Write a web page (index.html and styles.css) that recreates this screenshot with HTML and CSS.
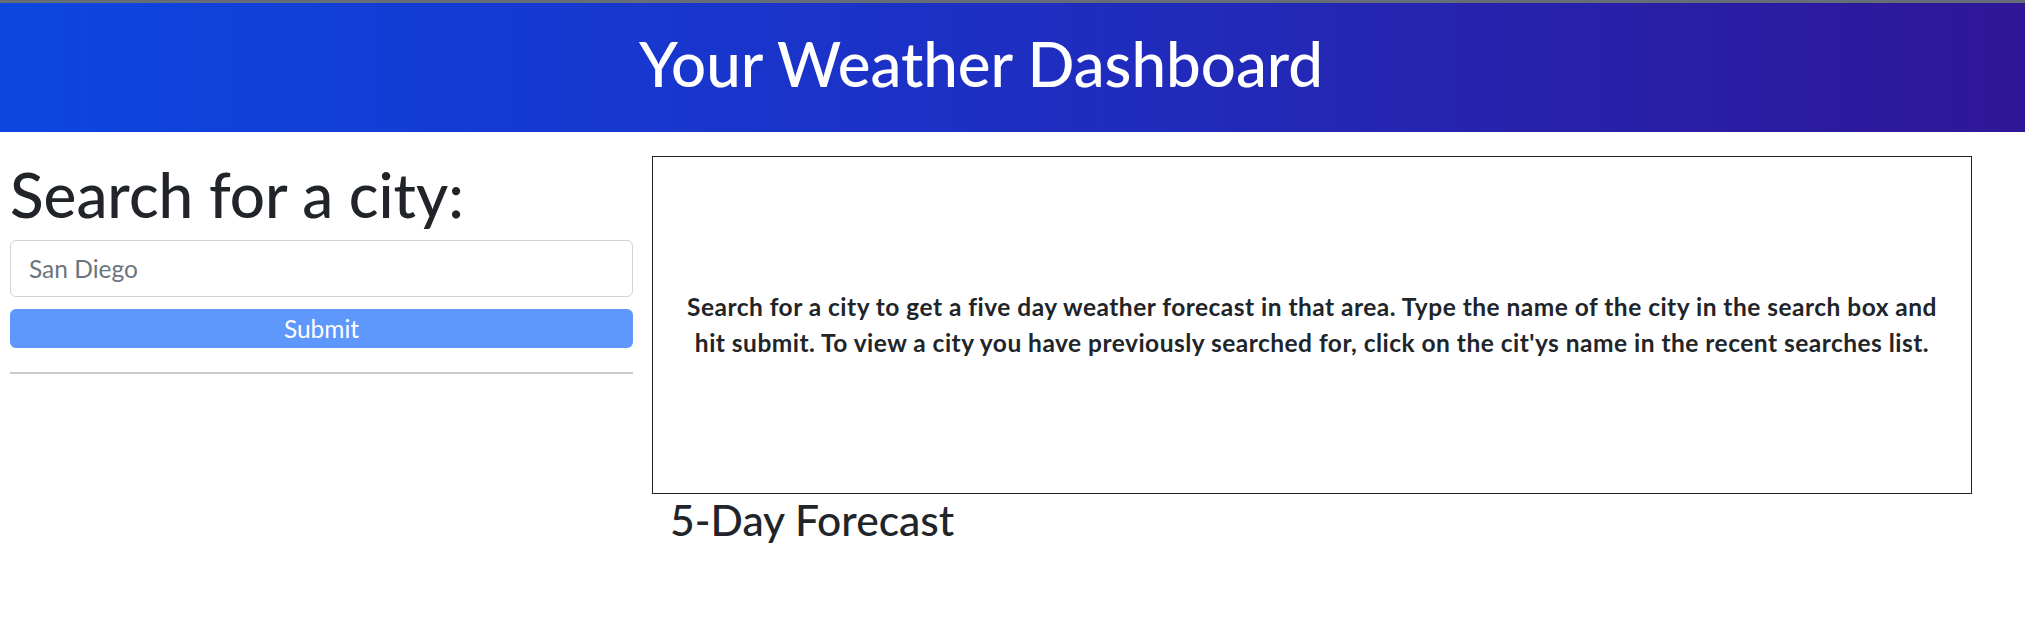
FILE: index.html
```html
<!DOCTYPE html>
<html lang="en">
<head>
<meta charset="utf-8">
<title>Your Weather Dashboard</title>
<link rel="stylesheet" href="styles.css">
</head>
<body>
<div class="topline"></div>
<header class="hero">
  <h1 class="hero-title">Your Weather Dashboard</h1>
</header>
<main class="main">
  <section class="sidebar">
    <h2 class="search-title">Search for a city:</h2>
    <input class="city-input" type="text" placeholder="San Diego">
    <button class="submit-btn" type="button">Submit</button>
    <hr class="divider">
  </section>
  <section class="content">
    <div class="current-box">
      <p class="intro">Search for a city to get a five day weather forecast in that area. Type the name of the city in the search box and hit submit. To view a city you have previously searched for, click on the cit'ys name in the recent searches list.</p>
    </div>
    <h3 class="forecast-title">5-Day Forecast</h3>
  </section>
</main>
</body>
</html>
```
FILE: styles.css
```css
* { box-sizing: border-box; }
html, body { margin: 0; padding: 0; }
body {
  font-family: Lato, "Open Sans", sans-serif;
  color: #212529;
  background: #fff;
  width: 2025px;
}
.topline { height: 3px; background: #646d78; }
.hero {
  height: 129px;
  display: flex;
  align-items: center;
  justify-content: center;
  padding: 0 63px 9px 0;
  background: linear-gradient(90deg, #0c46e1 0%, #1c31c6 45%, #2f1697 100%);
}
.hero-title {
  margin: 0;
  color: #fff;
  font-weight: 500;
  font-size: 61.8px;
  line-height: 1.2;
}
.main {
  display: flex;
  padding: 23px 0 0 10px;
}
.sidebar {
  width: 623px;
  padding-top: 2px;
  display: flex;
  flex-direction: column;
}
.search-title {
  margin: 0 0 9px;
  font-weight: 500;
  font-size: 62px;
  line-height: 1.2;
}
.city-input {
  height: 57px;
  border: 1px solid #ced4da;
  border-radius: 6px;
  padding: 0 18px;
  font-family: inherit;
  font-size: 24.5px;
  color: #212529;
}
.city-input::placeholder { color: #6c757d; }
.submit-btn {
  margin-top: 12px;
  height: 39px;
  border: 0;
  border-radius: 6px;
  background: #5f98fd;
  color: #fff;
  font-family: inherit;
  font-size: 24.5px;
  padding: 0;
  line-height: 39px;
}
.divider {
  margin: 24px 0 0;
  border: 0;
  height: 2px;
  background: #cbcbcb;
}
.content {
  margin-left: 19px;
  padding-top: 1px;
  display: flex;
  flex-direction: column;
}
.current-box {
  width: 1320px;
  height: 338px;
  border: 1px solid #222;
  display: flex;
  align-items: center;
  justify-content: center;
  padding: 0 27px;
}
.intro {
  margin: 0;
  text-align: center;
  font-weight: 700;
  font-size: 24.5px;
  letter-spacing: 0.48px;
  line-height: 36px;
}
.forecast-title {
  margin: 0;
  padding-left: 18px;
  font-weight: 500;
  font-size: 42.6px;
  line-height: 1.2;
}
```
